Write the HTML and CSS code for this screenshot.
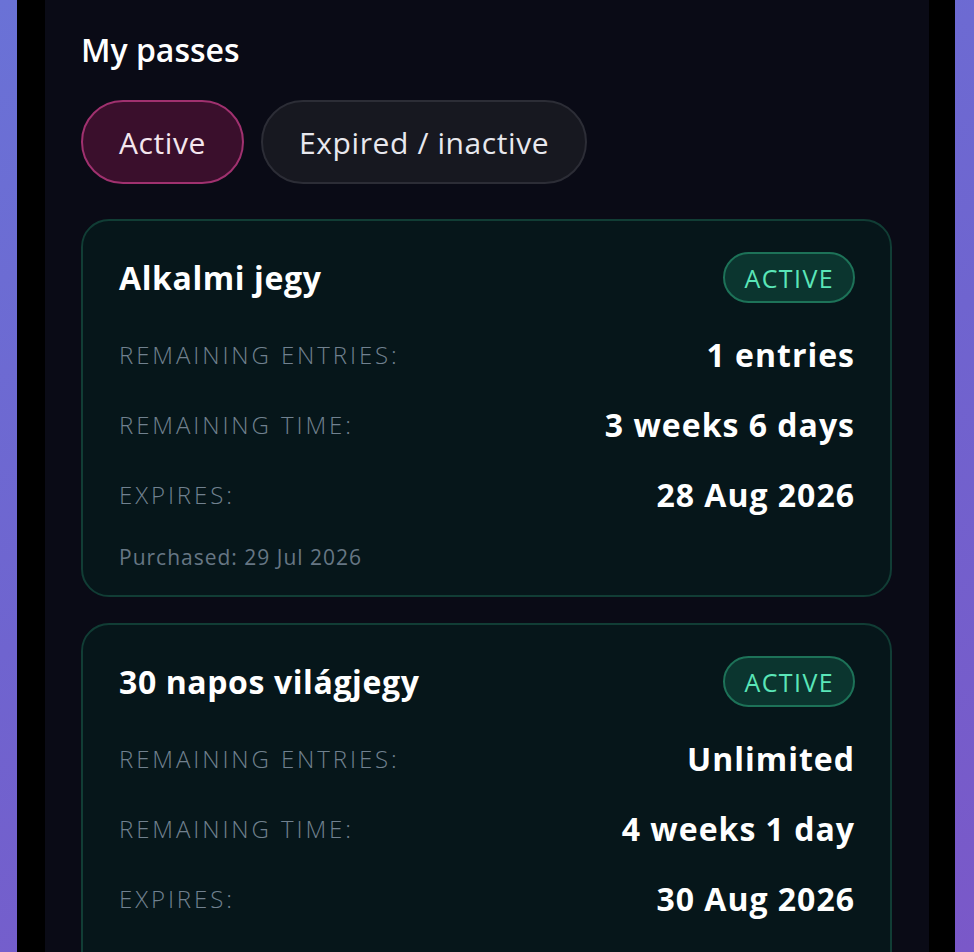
FILE: index.html
```html
<!DOCTYPE html>
<html lang="en">
<head>
<meta charset="utf-8">
<title>My passes</title>
<link rel="stylesheet" href="styles.css">
</head>
<body>
<div class="frame">
  <main class="panel">
    <h1 class="heading">My passes</h1>
    <div class="tabs">
      <button class="tab tab-active">Active</button>
      <button class="tab">Expired / inactive</button>
    </div>
    <section class="card">
      <div class="card-head">
        <h2 class="card-title">Alkalmi jegy</h2>
        <span class="badge">ACTIVE</span>
      </div>
      <div class="row"><span class="label">REMAINING ENTRIES:</span><span class="value">1 entries</span></div>
      <div class="row"><span class="label">REMAINING TIME:</span><span class="value">3 weeks 6 days</span></div>
      <div class="row"><span class="label">EXPIRES:</span><span class="value">28 Aug 2026</span></div>
      <p class="purchased">Purchased: 29 Jul 2026</p>
    </section>
    <section class="card">
      <div class="card-head">
        <h2 class="card-title">30 napos világjegy</h2>
        <span class="badge">ACTIVE</span>
      </div>
      <div class="row"><span class="label">REMAINING ENTRIES:</span><span class="value">Unlimited</span></div>
      <div class="row"><span class="label">REMAINING TIME:</span><span class="value">4 weeks 1 day</span></div>
      <div class="row"><span class="label">EXPIRES:</span><span class="value">30 Aug 2026</span></div>
      <p class="purchased">Purchased: 31 Jul 2026</p>
    </section>
  </main>
</div>
</body>
</html>
```
FILE: styles.css
```css
* { box-sizing: border-box; }
html, body { height: 100%; }
body {
  margin: 0;
  background: linear-gradient(160deg, #6a72d6 0%, #6f64cf 50%, #7a58c8 100%);
  font-family: "Open Sans", "Noto Sans", sans-serif;
  overflow: hidden;
}
.frame {
  margin: 0 19px 0 17px;
  height: 100%;
  background: #000;
  padding: 0 26px 0 28px;
}
.panel {
  height: 100%;
  overflow: hidden;
  background: #0a0b16;
  padding: 31px 37px 0 36px;
}
.heading {
  margin: 0;
  color: #ffffff;
  font-size: 32px;
  font-weight: 600;
  line-height: 38px;
}
.tabs {
  display: flex;
  gap: 17px;
  margin-top: 31px;
}
.tab {
  font-family: inherit;
  height: 84px;
  padding: 0 36px;
  border-radius: 42px;
  font-size: 30px;
  letter-spacing: 0.6px;
  color: #e8e8ee;
  background: #171820;
  border: 2px solid #2c2d36;
}
.tab-active {
  background: #3a0f2c;
  border-color: #a0316f;
  color: #f4e6ee;
}
.card {
  margin-top: 35px;
  background: #06161a;
  border: 2px solid #113d35;
  border-radius: 28px;
  padding: 31px 35px 24px 36px;
}
.card + .card { margin-top: 26px; }
.card-head {
  display: flex;
  justify-content: space-between;
  align-items: center;
  height: 51px;
  margin-bottom: 16px;
}
.card-title {
  margin: 0;
  color: #fff;
  font-size: 32px;
  font-weight: 700;
  letter-spacing: 0.6px;
}
.badge {
  height: 51px;
  padding: 0 19px;
  display: flex;
  align-items: center;
  border-radius: 26px;
  background: #0b352f;
  border: 2px solid #1d7258;
  color: #5ae6b8;
  font-size: 25px;
  letter-spacing: 1.4px;
}
.row {
  display: flex;
  justify-content: space-between;
  align-items: center;
  height: 70px;
}
.label {
  color: #71818f;
  font-size: 24px;
  font-weight: 300;
  letter-spacing: 2.9px;
}
.value {
  color: #fff;
  font-size: 32px;
  font-weight: 700;
  letter-spacing: 1px;
}
.purchased {
  margin: 14px 0 0;
  color: #667684;
  font-size: 21px;
  line-height: 28px;
  letter-spacing: 1px;
}
```
